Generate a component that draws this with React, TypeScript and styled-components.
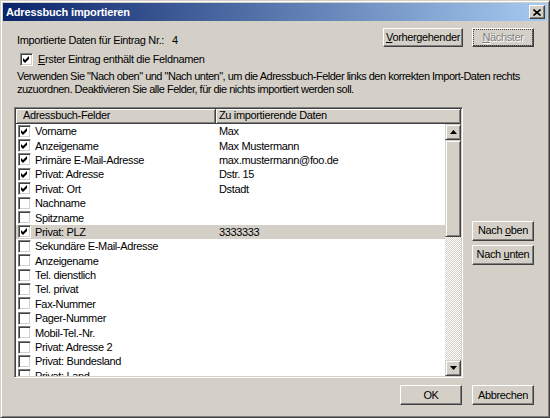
import styled, { createGlobalStyle } from "styled-components";

const GlobalStyle = createGlobalStyle`
  html, body {
    margin: 0;
    padding: 0;
    background: #d4d0c8;
  }
  * {
    box-sizing: border-box;
  }
`;

type Row = {
  field: string;
  value?: string;
  checked?: boolean;
  selected?: boolean;
};

const rows: Row[] = [
  { field: "Vorname", value: "Max", checked: true },
  { field: "Anzeigename", value: "Max Mustermann", checked: true },
  { field: "Primäre E-Mail-Adresse", value: "max.mustermann@foo.de", checked: true },
  { field: "Privat: Adresse", value: "Dstr. 15", checked: true },
  { field: "Privat: Ort", value: "Dstadt", checked: true },
  { field: "Nachname" },
  { field: "Spitzname" },
  { field: "Privat: PLZ", value: "3333333", checked: true, selected: true },
  { field: "Sekundäre E-Mail-Adresse" },
  { field: "Anzeigename" },
  { field: "Tel. dienstlich" },
  { field: "Tel. privat" },
  { field: "Fax-Nummer" },
  { field: "Pager-Nummer" },
  { field: "Mobil-Tel.-Nr." },
  { field: "Privat: Adresse 2" },
  { field: "Privat: Bundesland" },
  { field: "Privat: Land" },
];

function CheckBox({ checked }: { checked?: boolean }) {
  return (
    <Box>
      {checked && (
        <svg width="7" height="7" viewBox="0 0 7 7">
          <polygon points="0,2 2,4 6,0 6,3 2,7 0,5" fill="#000" />
        </svg>
      )}
    </Box>
  );
}

function Arrow({ down }: { down?: boolean }) {
  return (
    <svg width="7" height="4" viewBox="0 0 7 4">
      {down ? <polygon points="0,0 7,0 3.5,4" fill="#000" /> : <polygon points="0,4 7,4 3.5,0" fill="#000" />}
    </svg>
  );
}

export default function App() {
  return (
    <>
      <GlobalStyle />
      <Window>
        <TitleBar>
          <Title>Adressbuch importieren</Title>
          <CloseButton>
            <svg width="8" height="7" viewBox="0 0 8 7">
              <path d="M0.5 0.5 L7.5 6.5 M7.5 0.5 L0.5 6.5" stroke="#000" strokeWidth="1.6" />
            </svg>
          </CloseButton>
        </TitleBar>
        <Body>
          <TopRow>
            <RecordLabel>
              Importierte Daten für Eintrag Nr.:<RecordNo>4</RecordNo>
            </RecordLabel>
            <Button $w={80} $h={19}>
              <span>
                <u>V</u>orhergehender
              </span>
            </Button>
          </TopRow>
          <Button $w={62} $h={19} $disabled>
            <span>
              <u>N</u>ächster
            </span>
          </Button>

          <CheckRow>
            <CheckBox checked />
            <span>
              <u>E</u>rster Eintrag enthält die Feldnamen
            </span>
          </CheckRow>

          <Hint>
            Verwenden Sie "Nach oben" und "Nach unten", um die Adressbuch-Felder links den korrekten Import-Daten rechts
            <br />
            zuzuordnen. Deaktivieren Sie alle Felder, für die nichts importiert werden soll.
          </Hint>

          <ListFrame>
            <Header>
              <HeaderCell $w={200} $pad={7}>
                Adressbuch-Felder
              </HeaderCell>
              <HeaderCell $pad={3}>Zu importierende Daten</HeaderCell>
            </Header>
            <ListBody>
              <Rows>
                {rows.map((r, i) => (
                  <ListRow key={i} $selected={r.selected}>
                    <FieldCell>
                      <CheckBox checked={r.checked} />
                      <span>{r.field}</span>
                    </FieldCell>
                    <ValueCell>{r.value}</ValueCell>
                  </ListRow>
                ))}
              </Rows>
              <ScrollBar>
                <ScrollButton>
                  <Arrow />
                </ScrollButton>
                <Track>
                  <Thumb />
                </Track>
                <ScrollButton>
                  <Arrow down />
                </ScrollButton>
              </ScrollBar>
            </ListBody>
          </ListFrame>

          <SideStack>
            <Button $w={62} $h={20}>
              <span>
                Nach <u>o</u>ben
              </span>
            </Button>
            <Button $w={62} $h={20}>
              <span>
                Nach <u>u</u>nten
              </span>
            </Button>
          </SideStack>

          <BottomRow>
            <Button $w={62} $h={20}>
              <span>OK</span>
            </Button>
          </BottomRow>
          <BottomSide>
            <Button $w={62} $h={20}>
              <span>Abbrechen</span>
            </Button>
          </BottomSide>
        </Body>
      </Window>
    </>
  );
}

const Window = styled.div`
  width: 550px;
  height: 418px;
  display: flex;
  flex-direction: column;
  background: #d4d0c8;
  border: 1px solid;
  border-color: #d4d0c8 #404040 #404040 #d4d0c8;
  box-shadow: inset 1px 1px #ffffff, inset -1px -1px #808080;
  padding: 2px;
  font-family: "Liberation Sans", Arial, sans-serif;
  font-size: 11px;
  letter-spacing: -0.35px;
  color: #000;
  overflow: hidden;
`;

const TitleBar = styled.div`
  height: 18px;
  flex-shrink: 0;
  display: flex;
  align-items: center;
  justify-content: space-between;
  padding: 0 2px 0 3px;
  background: linear-gradient(to right, #0a246a, #a6caf0);
`;

const Title = styled.span`
  color: #fff;
  font-weight: bold;
  font-size: 11px;
  letter-spacing: -0.15px;
`;

const CloseButton = styled.div`
  width: 16px;
  height: 14px;
  display: flex;
  align-items: center;
  justify-content: center;
  background: #d4d0c8;
  border: 1px solid;
  border-color: #ffffff #404040 #404040 #ffffff;
  box-shadow: inset -1px -1px #808080;
`;

const Body = styled.div`
  flex: 1;
  display: grid;
  grid-template-columns: 449px 62px;
  grid-template-rows: auto auto auto 1fr auto;
  column-gap: 9px;
  padding: 7px 13px 10px 11px;
`;

const TopRow = styled.div`
  display: flex;
  justify-content: space-between;
  align-items: flex-start;
`;

const RecordLabel = styled.div`
  padding-top: 6px;
  padding-left: 3px;
  line-height: 13px;
`;

const RecordNo = styled.span`
  margin-left: 8px;
`;

const Button = styled.div<{ $w: number; $h: number; $disabled?: boolean }>`
  width: ${(p) => p.$w}px;
  height: ${(p) => p.$h}px;
  display: flex;
  align-items: center;
  justify-content: center;
  background: #d4d0c8;
  border: 1px solid;
  border-color: #ffffff #404040 #404040 #ffffff;
  box-shadow: inset -1px -1px #808080;
  line-height: 13px;
  white-space: nowrap;
  color: ${(p) => (p.$disabled ? "#808080" : "#000")};
  text-shadow: ${(p) => (p.$disabled ? "1px 1px #ffffff" : "none")};
  outline: ${(p) => (p.$disabled ? "1px dotted #404040" : "none")};
  outline-offset: -2px;
  u {
    text-decoration-thickness: 1px;
    text-underline-offset: 1px;
  }
`;

const CheckRow = styled.div`
  grid-column: 1 / -1;
  margin-top: 6px;
  padding-left: 6px;
  display: flex;
  align-items: center;
  gap: 5px;
  height: 13px;
  line-height: 13px;
`;

const Box = styled.div`
  width: 13px;
  height: 13px;
  flex-shrink: 0;
  display: flex;
  align-items: center;
  justify-content: center;
  background: #fff;
  border: 1px solid;
  border-color: #808080 #ffffff #ffffff #808080;
  box-shadow: inset 1px 1px #404040, inset -1px -1px #d4d0c8;
`;

const Hint = styled.p`
  grid-column: 1 / -1;
  margin: 4px 0 0 3px;
  line-height: 13px;
  letter-spacing: -0.5px;
  white-space: nowrap;
`;

const ListFrame = styled.div`
  margin-top: 11px;
  height: 271px;
  display: flex;
  flex-direction: column;
  background: #fff;
  border: 1px solid;
  border-color: #808080 #ffffff #ffffff #808080;
  box-shadow: inset 1px 1px #404040, inset -1px -1px #d4d0c8;
  padding: 1px;
`;

const Header = styled.div`
  height: 15px;
  flex-shrink: 0;
  display: flex;
`;

const HeaderCell = styled.div<{ $w?: number; $pad: number }>`
  ${(p) => (p.$w ? `width: ${p.$w}px;` : "flex: 1;")}
  padding-left: ${(p) => p.$pad}px;
  background: #d4d0c8;
  border-right: 1px solid #404040;
  border-bottom: 1px solid #404040;
  box-shadow: inset 1px 1px #ffffff, inset -1px -1px #808080;
  line-height: 13px;
  white-space: nowrap;
`;

const ListBody = styled.div`
  flex: 1;
  display: flex;
  min-height: 0;
`;

const Rows = styled.div`
  flex: 1;
  overflow: hidden;
`;

const ListRow = styled.div<{ $selected?: boolean }>`
  height: 14.4px;
  display: flex;
  align-items: center;
  background: ${(p) => (p.$selected ? "#d4d0c8" : "transparent")};
  white-space: nowrap;
`;

const FieldCell = styled.div`
  width: 200px;
  display: flex;
  align-items: center;
  gap: 4px;
  padding-left: 2px;
`;

const ValueCell = styled.div`
  padding-left: 3px;
`;

const ScrollBar = styled.div`
  width: 16px;
  display: flex;
  flex-direction: column;
`;

const ScrollButton = styled.div`
  width: 16px;
  height: 16px;
  flex-shrink: 0;
  display: flex;
  align-items: center;
  justify-content: center;
  background: #d4d0c8;
  border: 1px solid;
  border-color: #d4d0c8 #404040 #404040 #d4d0c8;
  box-shadow: inset 1px 1px #ffffff, inset -1px -1px #808080;
`;

const Track = styled.div`
  flex: 1;
  background: repeating-conic-gradient(#ffffff 0 25%, #d4d0c8 0 50%) 0 0 / 2px 2px;
`;

const Thumb = styled.div`
  height: 97px;
  background: #d4d0c8;
  border: 1px solid;
  border-color: #d4d0c8 #404040 #404040 #d4d0c8;
  box-shadow: inset 1px 1px #ffffff, inset -1px -1px #808080;
`;

const SideStack = styled.div`
  align-self: center;
  margin-top: 11px;
  display: flex;
  flex-direction: column;
  gap: 4px;
`;

const BottomRow = styled.div`
  margin-top: 7px;
  display: flex;
  justify-content: flex-end;
  padding-right: 1px;
`;

const BottomSide = styled.div`
  margin-top: 7px;
`;
